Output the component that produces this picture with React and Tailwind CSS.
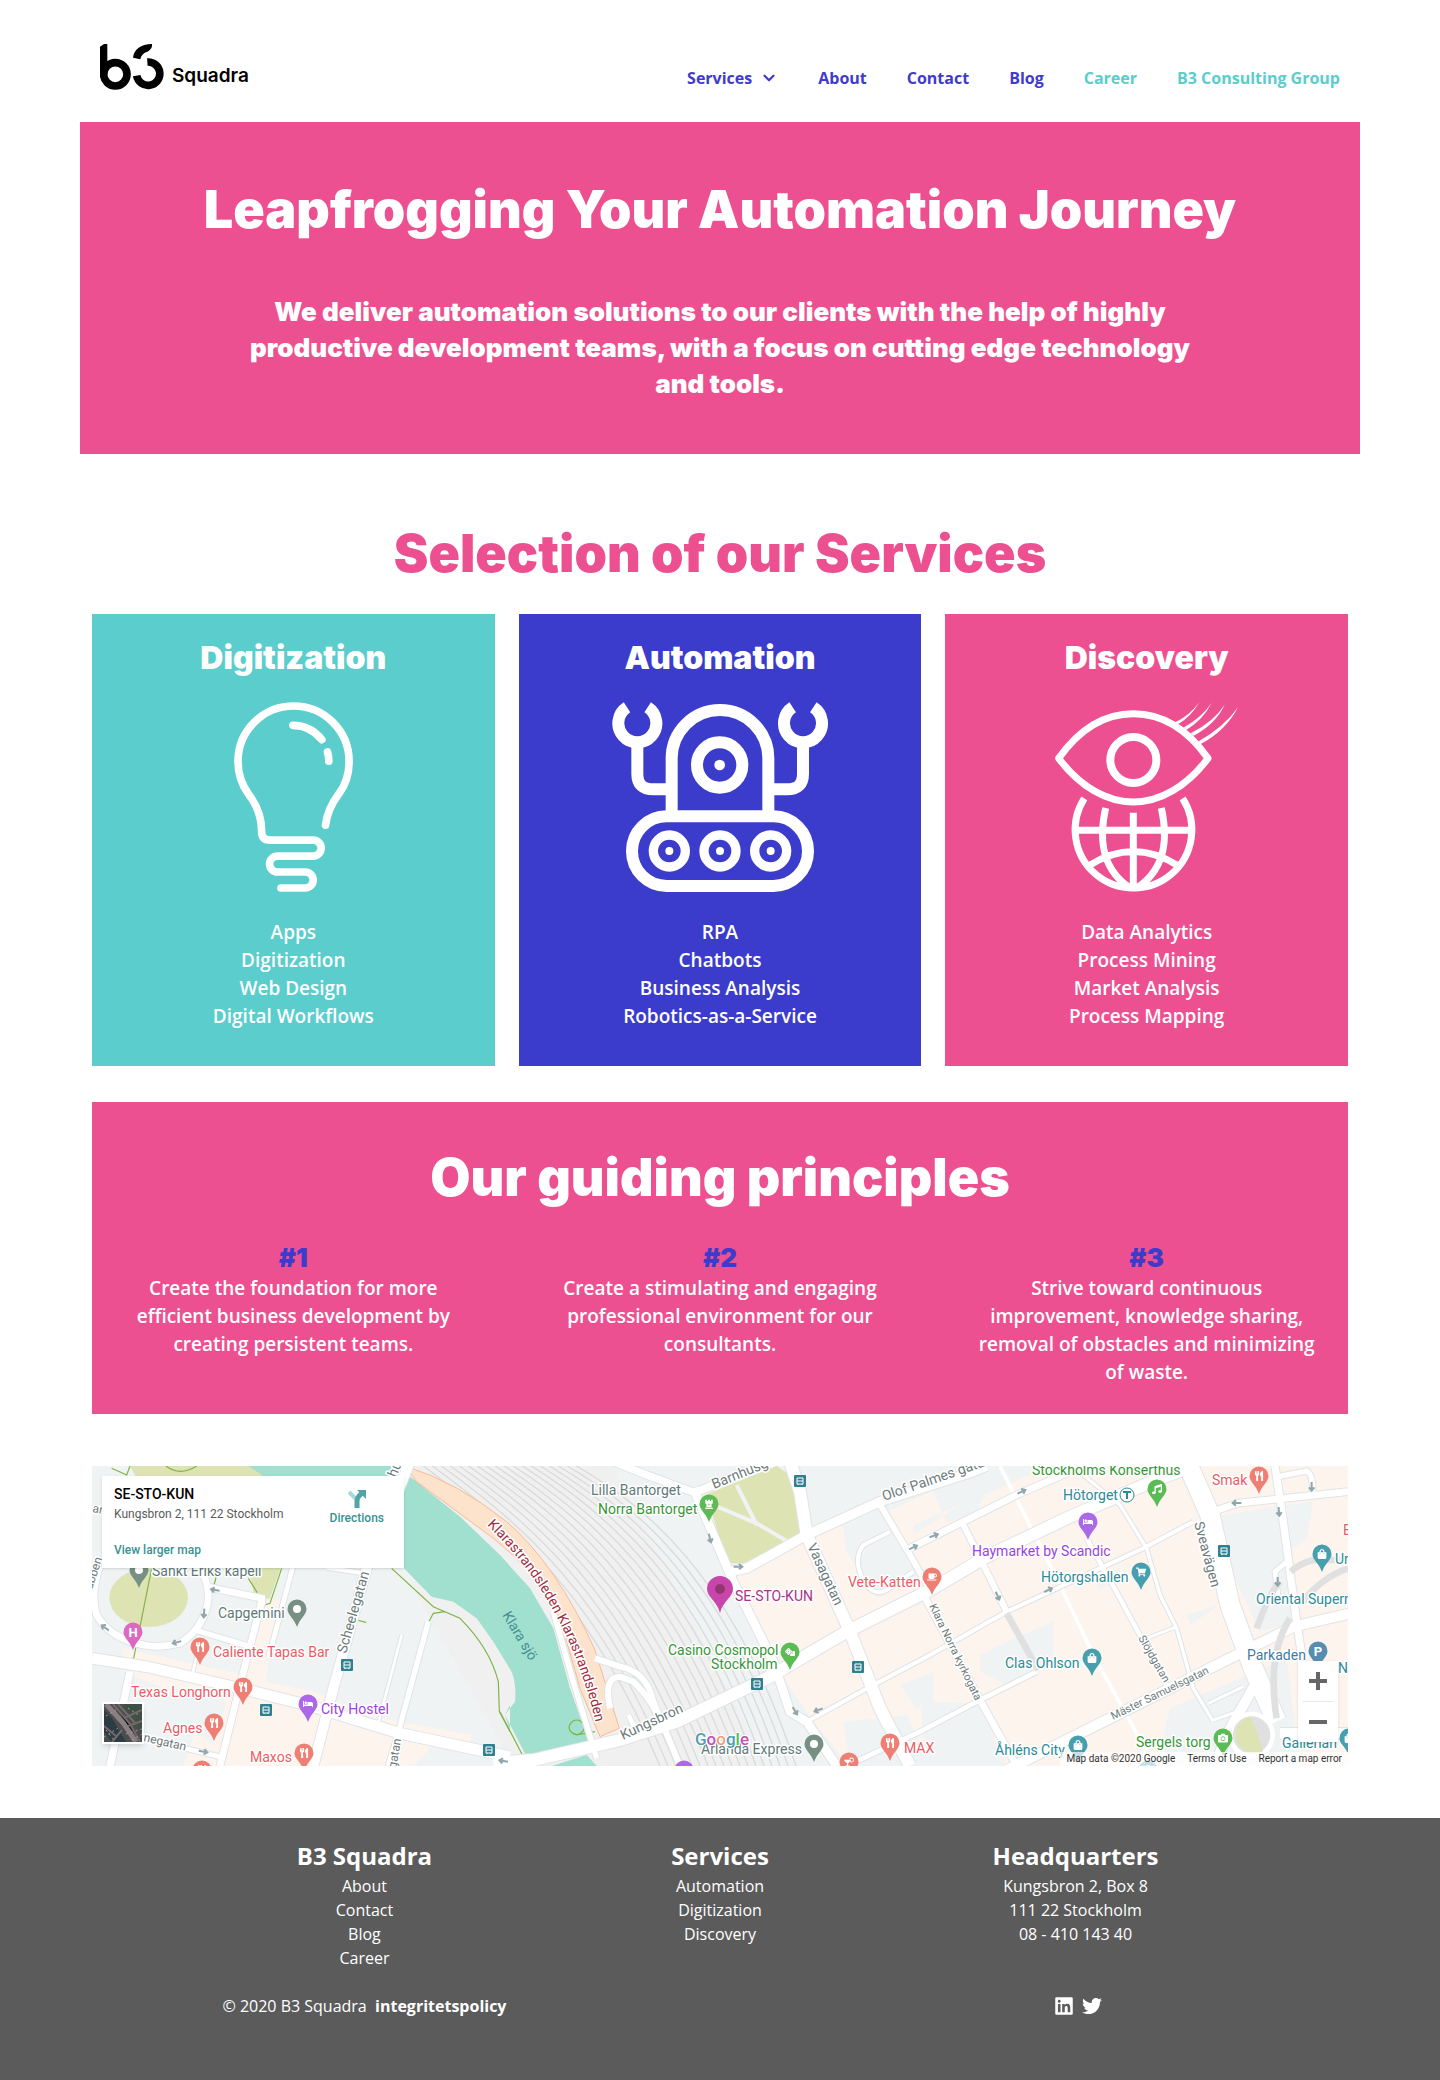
import React from "react";
import { FaLinkedin, FaTwitter, FaUtensils, FaBed, FaShoppingBag, FaMusic, FaCamera, FaShoppingCart, FaCoffee, FaChessRook, FaDice, FaCocktail } from "react-icons/fa";
import { ChevronDown } from "lucide-react";

const heading = "font-['Inter'] font-black";

function Logo() {
  return (
    <a href="#home" aria-label="B3 Squadra" className="flex items-end gap-2 text-black">
      <svg viewBox="18 24 192 138" className="h-[46px] w-16" fill="none" stroke="currentColor" strokeWidth="23">
        <path d="M18 32L30 24H40V115H18Z" fill="currentColor" stroke="none" />
        <circle cx="64" cy="115" r="35" />
        <path d="M117 65C120 40 140 24 174 24C176 34 168 44 158 48C148 51 141 59 139 70Z" fill="currentColor" stroke="none" />
        <path d="M128 119A35 35 0 1 0 160 78" />
      </svg>
      <span className="font-['Inter'] text-[19px] font-semibold leading-7">Squadra</span>
    </a>
  );
}

function Header() {
  const link = "hover:underline";
  return (
    <header className="flex items-start justify-between px-5 pb-8 pt-11">
      <Logo />
      <nav className="mt-[22px] flex items-center gap-10 text-base font-bold leading-6 text-[#3f3bcb]">
        <button type="button" className="flex items-center gap-2">
          Services
          <ChevronDown size={18} strokeWidth={3} />
        </button>
        <a className={link} href="#about">About</a>
        <a className={link} href="#contact">Contact</a>
        <a className={link} href="#blog">Blog</a>
        <a className="text-[#5acdcc] hover:underline" href="#career">Career</a>
        <a className="text-[#5acdcc] hover:underline" href="#group">B3 Consulting Group</a>
      </nav>
    </header>
  );
}

const Bulb = () => (
  <svg viewBox="462 306 358 571" className="h-[190px]" fill="none" stroke="white" strokeWidth="23" strokeLinecap="round">
    <path d="M737 676C742 640 755 612 775 585C797 557 808 525 808 485A167 167 0 0 0 474 485C474 525 485 555 507 585C530 615 545 650 545 695Q545 721 570 721H700A24 24 0 0 1 700 769H593A24 24 0 0 0 593 817H676A24 24 0 0 1 676 865H603" />
    <path d="M639 376Q692 376 726 419M743 456Q747 470 747 484" />
  </svg>
);

const Robot = () => (
  <svg viewBox="306 306 648 570" className="h-[190px]" fill="none" stroke="white" strokeWidth="36">
    <path d="M485 640V475A145 145 0 0 1 775 475V640" />
    <rect x="366" y="649" width="528" height="209" rx="104" />
    <circle cx="629" cy="495" r="68" />
    <circle cx="629" cy="495" r="16" fill="white" stroke="none" />
    <path d="M382 430V522Q382 568 430 568H475M879 430V522Q879 568 831 568H785" />
    <path d="M351 322A57 57 0 1 0 413 322M848 322A57 57 0 1 0 910 322" />
    {[478, 630, 782].map((x) => (
      <g key={x}>
        <circle cx={x} cy="753" r="48" strokeWidth="28" />
        <circle cx={x} cy="753" r="12" fill="white" stroke="none" />
      </g>
    ))}
  </svg>
);

const Eye = () => (
  <svg viewBox="345 306 550 570" className="h-[190px]" fill="none" stroke="white" strokeWidth="21">
    <path strokeLinejoin="round" d="M356 475C430 370 510 341 580 341S730 370 804 475C740 560 660 606 580 606S420 560 356 475Z" />
    <circle cx="580" cy="480" r="69" strokeWidth="24" />
    <g fill="white" stroke="none">
      <path d="M703 368Q752 345 778 306Q754 350 712 374Z" />
      <path d="M730 383Q786 352 815 308Q790 358 739 390Z" />
      <path d="M752 400Q822 364 854 314Q828 371 761 407Z" />
      <path d="M774 425Q852 382 894 322Q858 392 781 433Z" />
    </g>
    <path d="M433 595A175 175 0 1 0 728 595M404 691H758M580 638V870M497 624C480 700 475 800 570 864M664 624C681 700 686 800 591 864M447 797Q580 712 714 797" />
  </svg>
);

const services = [
  { title: "Digitization", Icon: Bulb, bg: "bg-[#5acdcc]", items: ["Apps", "Digitization", "Web Design", "Digital Workflows"] },
  { title: "Automation", Icon: Robot, bg: "bg-[#3c3ccc]", items: ["RPA", "Chatbots", "Business Analysis", "Robotics-as-a-Service"] },
  { title: "Discovery", Icon: Eye, bg: "bg-[#ed5090]", items: ["Data Analytics", "Process Mining", "Market Analysis", "Process Mapping"] },
];

const principles = [
  "Create the foundation for more efficient business development by creating persistent teams.",
  "Create a stimulating and engaging professional environment for our consultants.",
  "Strive toward continuous improvement, knowledge sharing, removal of obstacles and minimizing of waste.",
];

/* Map geometry is kept in a grid three times finer than the drawn pixels. */
const roads = [
  ["M36 610L200 635L480 700L700 755L960 835L1290 905", 32],
  ["M1240 925L1360 915L1620 855L1790 800L2060 670L2300 530L2550 405L2720 305L2960 190L3240 70L3340 33", 36],
  ["M150 650L90 933", 22],
  ["M545 440L480 690L420 933", 20],
  ["M380 395L545 430V450", 20],
  ["M345 320Q395 380 382 450Q365 525 300 565Q240 580 190 570Q90 550 50 480Q30 420 60 330", 20],
  ["M345 525L510 575", 16],
  ["M640 330L565 610", 14],
  ["M990 20L860 340L760 700L700 933", 30],
  ["M965 540L892 815", 8],
  ["M1045 500L950 850L925 933", 16],
  ["M740 338L850 355", 12],
  ["M350 600L335 670", 8],
  ["M190 850L420 905", 14],
  ["M1600 20L1700 60L1850 115", 22],
  ["M1840 115L2070 20", 24],
  ["M1840 100L1900 240L1960 380L2080 620L2130 770L2180 800L2270 933", 26],
  ["M2130 20L2160 110L2180 240L2310 530L2400 760L2490 933", 36],
  ["M1950 350L2000 340L2180 240L2400 140L2680 50L2720 33", 28],
  ["M2480 285L2520 265L2820 115L3010 33", 20],
  ["M2395 140L2490 300L2550 405", 18],
  ["M2180 800L2380 690L2550 600L2780 470L3190 280L3340 200", 12],
  ["M2430 230L2350 270Q2320 310 2345 365Q2375 430 2420 405L2500 350", 12],
  ["M2650 210L2780 470", 18],
  ["M2520 400L2700 735L2810 933", 20],
  ["M2300 933L2520 830L2700 735L2870 650", 14],
  ["M3010 60L3120 150L3200 280L3240 420L3290 520L3340 700L3400 800", 10],
  ["M3020 250L3120 430L3260 690", 13],
  ["M3200 550L3290 515", 8],
  ["M3385 745L3490 695M3400 795L3500 760", 9],
  ["M2780 945L3090 790L3360 655L3640 515L3810 475", 30],
  ["M3320 20L3390 180L3450 450L3520 640L3590 800", 58],
  ["M3400 170L3470 145L3804 110", 20],
  ["M3585 33L3610 200L3650 500L3680 700", 22],
  ["M3595 65L3680 48Q3700 60 3698 110", 16],
  ["M3595 430L3585 350L3620 320", 14],
  ["M3600 835H3810", 32],
  ["M3400 945L3440 840L3530 680", 30],
  ["M1545 610L1620 635Q1700 650 1720 740L1800 933M1590 760Q1570 665 1620 665L1660 680Q1720 740 1735 790", 18],
  ["M1645 780L1680 850", 14],
  ["M1420 470L1480 680L1550 910", 16],
];

const rails = Array.from({ length: 18 }, (_, i) =>
  `M${1030 + 27 * i} 33C${1270 + 24 * i} ${210 - 4 * i} ${1530 + 25 * i} ${430 - 5 * i} ${1740 + 24 * i} 933`
).join("");

function MapBase() {
  return (
    <g transform="translate(-12 -11) scale(.33333)">
      <rect x="36" y="33" width="3768" height="900" fill="#f0f3f3" />
      <path fill="#f0f0f0" d="M1000 33H1600L2060 933H1300L1000 400Z" />
      <path fill="#fef4ee" d="M130 580L490 660L545 440L605 432L555 680L700 710L900 790L1175 840L1165 880L1060 870L1000 933H310L345 830L400 870L440 740L250 700L130 650Z" />
      <path fill="#fef4ee" d="M1965 365L2190 250L2285 205L2300 260L2420 170L2600 90L3100 33H3804V933H2560L2480 780L2290 800L2310 933L2200 800L2080 620Z" />
      <path fill="#f0f3f3" d="M2290 235L2420 160L2490 290L2520 380L2390 430L2300 290ZM2500 240L2720 100L2690 180L2600 200L2520 33H2760L2850 60L2500 210ZM2460 690L2560 650V750L2510 760ZM3380 190L3600 150L3640 500L3540 530ZM3620 150L3700 140L3680 250L3630 290ZM3270 760L3620 610L3660 933H3230ZM2520 740L2700 745L2780 933H2540ZM2700 600L2780 560L2920 500V620L2780 690L2700 650ZM3040 370L3120 340V380L3060 400ZM3320 480L3420 450L3330 510Z" />
      <path fill="#dde3b3" d="M150 33H520L570 70L170 70ZM505 330H605L570 430L525 435Z" />
      <ellipse cx="206" cy="428" rx="118" ry="88" fill="#dde3b3" />
      <path fill="#a1dfcf" d="M505 33H950L1010 80L1140 185L1260 300L1350 400L1420 520L1470 700L1530 870L1345 915L1275 780L1305 740Q1310 690 1295 650L1240 560L1190 490L1120 440L1055 425L972 340ZM1415 933L1520 900L1550 933ZM1290 750L1275 780L1290 830Z" />
      <path fill="none" stroke="#d9dbdb" strokeWidth="4" d={rails} />
      <path fill="#fde3cb" stroke="#f9b994" strokeWidth="3" d="M975 33Q1130 80 1280 200Q1430 330 1545 585L1618 820L1560 845L1500 700L1440 490Q1370 350 1240 250L1010 80Z" />
      <path fill="#dde3b3" d="M1880 118L2090 33L2130 60L2165 200L2160 240L1990 325L1940 325Z" />
      <path fill="none" stroke="#f0f3f3" strokeWidth="12" d="M1900 150L2030 205L2150 275M1970 90L2030 210" />
      <path fill="none" stroke="#7eb445" strokeWidth="3.5" d="M95 40L140 60L150 33M258 33Q300 65 350 33M215 340L160 615M410 360L402 390M505 370L530 410V425M605 340L570 445L548 452M935 340L1060 455L1140 490Q1230 580 1255 680L1258 770L1290 830M1095 470L1060 475L1048 498M830 495L858 502M1260 770L1335 915M1545 830L1490 840C1450 830 1470 785 1500 797C1530 815 1500 850 1480 835M1510 800L1530 860" />
      <path fill="none" stroke="white" strokeWidth="11" d="M2760 33L2940 390L3040 600L3200 890" />
      <g fill="none" stroke="#e0e4e6">
        {roads.map(([d, w]) => <path key={d} d={d} strokeWidth={w + 6} />)}
      </g>
      <g fill="none" stroke="white">
        {roads.map(([d, w]) => <path key={d} d={d} strokeWidth={w} />)}
      </g>
      <g fill="none" stroke="#e0e0e0" strokeWidth="20">
        <path d="M2780 475L2875 645M3530 520Q3570 410 3600 380M3632 350Q3660 325 3700 315H3804M3590 790Q3560 600 3630 490M3665 445Q3720 370 3804 340" />
      </g>
      <circle cx="3515" cy="840" r="70" fill="white" />
      <circle cx="3515" cy="840" r="56" fill="#e0e0e0" />
      <path fill="#dde3b3" d="M3512 784L3550 888A56 56 0 1 1 3512 784Z" />
      <g fill="none" stroke="#91a5ad" strokeWidth="6">
        {[[405, 405, 190], [372, 475, 95], [75, 518, 215], [290, 562, 165], [370, 890, 10], [1890, 250, 75], [1975, 335, 0], [2145, 768, 60], [2215, 765, 160], [2500, 277, -25], [2562, 242, -20], [2825, 110, -25], [2753, 423, 65], [2905, 405, -25], [3470, 144, 180], [3597, 170, 85], [3695, 95, 90], [3593, 380, 90], [1270, 918, 190]].map(([x, y, r]) => (
          <path key={`${x}-${y}`} transform={`translate(${x} ${y}) rotate(${r})`} d="M-14 0H10M2 -8L12 0L2 8" />
        ))}
      </g>
    </g>
  );
}

const pinColors = { red: "#ef7f75", grey: "#779083", teal: "#459fae", purple: "#ab68e8", green: "#5bbb55", pink: "#dc69c1", blue: "#568eb2" };

const pins = [
  [47, 104, "grey", "dot"], [205, 143, "grey", "dot"], [722, 278, "grey", "dot"],
  [108, 181, "red", FaUtensils], [151, 221, "red", FaUtensils], [122, 257, "red", FaUtensils], [212, 287, "red", FaUtensils],
  [110, 304, "red", FaUtensils], [798, 277, "red", FaUtensils], [1167, 10, "red", FaUtensils], [757, 296, "red", FaCocktail], [840, 111, "red", FaCoffee],
  [216, 238, "purple", FaBed], [996, 56, "purple", FaBed], [592, 304, "purple", FaBed],
  [41, 166, "pink", "H"], [1226, 185, "blue", "P"],
  [617, 38, "green", FaChessRook], [698, 186, "green", FaDice], [1065, 23, "green", FaMusic], [1131, 272, "green", FaCamera],
  [1049, 106, "teal", FaShoppingCart], [1230, 88, "teal", FaShoppingBag], [1000, 192, "teal", FaShoppingBag], [986, 279, "teal", FaShoppingBag], [1257, 272, "teal", FaShoppingBag], [1056, 304, "teal", FaShoppingBag],
];

function Pin({ x, y, color, icon: Icon }) {
  return (
    <g transform={`translate(${x} ${y})`}>
      <path fill={pinColors[color]} d="M0 -9.5A9.5 9.5 0 0 1 9.5 0C9.5 6 3 9 0 18C-3 9 -9.5 6 -9.5 0A9.5 9.5 0 0 1 0 -9.5Z" />
      {Icon === "dot" && <circle r="4" fill="white" />}
      {(Icon === "H" || Icon === "P") && <text y="5" textAnchor="middle" fontSize="13" fontWeight="700" fill="white" stroke="none">{Icon}</text>}
      {typeof Icon === "function" && <Icon x="-5" y="-5" size={10} color="white" />}
    </g>
  );
}

const C = { grey: "#5f7a78", red: "#ee5b66", teal: "#2b8b96", purple: "#9a43de", green: "#389638", street: "#6d7b7b" };

const labels = [
  ["Sankt Eriks kapell", 60, 110, C.grey], ["Capgemini", 126, 152, C.grey], ["Lilla Bantorget", 499, 29, C.grey], ["Arlanda Express", 609, 288, C.grey],
  ["Caliente Tapas Bar", 121, 191, C.red], ["Texas Longhorn", 39, 231, C.red], ["Agnes", 71, 267, C.red], ["Maxos", 158, 296, C.red],
  ["MAX", 812, 287, C.red], ["Vete-Katten", 756, 121, C.red], ["Smak", 1120, 19, C.red], ["E", 1251, 69, C.red],
  ["City Hostel", 229, 248, C.purple], ["Haymarket by Scandic", 880, 90, C.purple],
  ["Norra Bantorget", 506, 48, C.green], ["Casino Cosmopol", 576, 189, C.green], ["Stockholm", 619, 203, C.green], ["Stockholms Konserthus", 940, 9, C.green], ["Sergels torg", 1044, 281, C.green],
  ["SE-STO-KUN", 643, 135, "#a8328c"],
  ["Hötorget", 971, 34, C.teal], ["Hötorgshallen", 949, 116, C.teal], ["Clas Ohlson", 913, 202, C.teal], ["Åhléns City", 903, 289, C.teal],
  ["Oriental Supermarket", 1164, 138, C.teal], ["Ur", 1243, 98, C.teal], ["Gallerian", 1190, 282, C.teal], ["N", 1246, 207, C.teal], ["Parkaden", 1155, 194, "#3f7ca9"],
  ["Scheelegatan", 254, 188, C.street, -74], ["negatan", 51, 275, C.street, 13, 12], ["gatan", 304, 303, C.street, -80, 12],
  ["an", 0, 46, C.street, 10, 12], ["ubben", 0, 124, C.street, -72, 12], ["hu", 304, 12, C.street, -68],
  ["Kungsbron", 531, 274, C.street, -25], ["Barnhusgatan", 622, 23, C.street, -22], ["Olof Palmes gata", 792, 35, C.street, -19],
  ["Vasagatan", 715, 80, C.street, 65], ["Klara Norra kyrkogata", 837, 140, C.street, 64, 11], ["Slöjdgatan", 1046, 172, C.street, 60, 11],
  ["Mäster Samuelsgatan", 1021, 254, C.street, -26, 11], ["Sveavägen", 1102, 57, C.street, 75],
];

const busStops = [[255, 199], [174, 244], [397, 284], [708, 15], [766, 201], [665, 218], [1132, 85]];

const googleLetters = [["G", "#4f9fb0"], ["o", "#c94fb5"], ["o", "#f0a07c"], ["g", "#4f9fb0"], ["l", "#5bbb55"], ["e", "#c94fb5"]];

function MapDrawing() {
  return (
    <svg viewBox="0 0 1256 300" preserveAspectRatio="xMidYMid slice" className="block h-full w-full font-['Roboto']" role="img" aria-label="Map of central Stockholm">
      <MapBase />
      {busStops.map(([x, y]) => (
        <g key={`${x}-${y}`} transform={`translate(${x} ${y})`}>
          <rect x="-6" y="-6" width="12" height="12" rx="1" fill="#2f8090" />
          <path d="M-3 -3H3V3H-3ZM-3 0H3M-2 3V4M2 3V4" fill="none" stroke="white" />
        </g>
      ))}
      <text fontSize="14" fill="#438f92" transform="translate(410 149) rotate(59)">Klara sjö</text>
      <g stroke="white" strokeWidth="3" strokeLinejoin="round" style={{ paintOrder: "stroke" }}>
        {labels.map(([t, x, y, fill, r = 0, size = 14]) => (
          <text key={t} fill={fill} fontSize={size} transform={`translate(${x} ${y}) rotate(${r})`}>{t}</text>
        ))}
        <path id="highway" d="M395 59C424 87 447 116 464 150Q492 200 508 275" fill="none" stroke="none" />
        <text fontSize="14" fill="#a02c40"><textPath href="#highway">Klarastrandsleden Klarastrandsleden</textPath></text>
      </g>
      {pins.map(([x, y, color, icon]) => <Pin key={`${x}-${y}`} x={x} y={y} color={color} icon={icon} />)}
      <circle cx="1035" cy="29" r="7" fill="white" stroke={C.teal} strokeWidth="1" />
      <path d="M1031 26H1039M1035 26V33" stroke={C.teal} strokeWidth="2" />
      <g transform="translate(628 123)">
        <path fill="#c846ab" d="M0 -13A13 13 0 0 1 13 0C13 8 3 12 0 24C-3 12 -13 8 -13 0A13 13 0 0 1 0 -13Z" />
        <circle r="5" fill="#943670" />
      </g>
      <text x="603" y="279" fontSize="17" fontWeight="500" stroke="white" strokeWidth="2" style={{ paintOrder: "stroke" }}>
        {googleLetters.map(([l, fill], i) => <tspan key={i} fill={fill}>{l}</tspan>)}
      </text>
    </svg>
  );
}

function MapSection() {
  return (
    <section className="relative mx-3 mt-[52px] h-[300px] overflow-hidden font-['Roboto']">
      <MapDrawing />
      <div className="absolute left-[10px] top-[10px] flex w-[302px] justify-between bg-white py-2 pl-3 pr-5 text-xs shadow">
        <div>
          <h3 className="text-sm font-medium leading-5 text-black">SE-STO-KUN</h3>
          <p className="leading-5 text-[#5b5b5b]">Kungsbron 2, 111 22 Stockholm</p>
          <a href="#larger" className="mt-4 block font-medium leading-5 text-[#3a9292]">View larger map</a>
        </div>
        <a href="#directions" className="flex flex-col items-center pt-1 font-medium text-[#3a9292]">
          <svg viewBox="0 0 18 20" className="h-5 w-[18px]" fill="none">
            <path d="M1 4L8 11" stroke="#a9dad8" strokeWidth="4" />
            <path d="M9 20V13Q9 10 11 8L14 5" stroke="#4fa5a8" strokeWidth="5" />
            <path d="M9 2H18V11Z" fill="#4fa5a8" />
          </svg>
          <span className="leading-5">Directions</span>
        </a>
      </div>
      <button type="button" aria-label="Show satellite imagery" className="absolute bottom-[22px] left-[10px] border-2 border-white bg-[#4a4f4e] shadow-md">
        <svg viewBox="0 0 38 38" className="size-[38px]">
          <path fill="#3f5144" d="M18 0H38V30L30 16Z" />
          <path fill="#2d3b45" d="M0 6L8 14L22 38H8L0 28Z" />
          <path stroke="#8c7f83" strokeWidth="5" d="M2 0L20 20L32 38" />
          <path stroke="#75696d" strokeWidth="2" d="M9 0L26 20L36 38M14 0L32 20M20 14L38 6M24 22L38 17M0 22L12 32M18 26L8 38" />
          <path stroke="#a09d97" strokeDasharray="2 3" d="M0 33L14 24M24 4L36 12M22 30L38 25M2 12L12 6M2 26L10 36M28 36L38 30" />
        </svg>
      </button>
      <div className="absolute bottom-0 right-0 flex gap-3 bg-white/70 px-[6px] text-[10px] leading-[14px] text-[#333]">
        <span>Map data ©2020 Google</span>
        <a href="#terms">Terms of Use</a>
        <a href="#report">Report a map error</a>
      </div>
      <div className="absolute bottom-6 right-[10px] flex w-10 flex-col items-center bg-white shadow">
        <button type="button" aria-label="Zoom in" className="flex size-10 items-center justify-center">
          <svg viewBox="0 0 18 18" className="size-[18px]"><path d="M0 9H18M9 0V18" stroke="#666" strokeWidth="4" /></svg>
        </button>
        <span className="h-px w-[30px] bg-[#e6e6e6]" />
        <button type="button" aria-label="Zoom out" className="flex size-10 items-center justify-center">
          <svg viewBox="0 0 18 18" className="size-[18px]"><path d="M0 9H18" stroke="#666" strokeWidth="4" /></svg>
        </button>
      </div>
    </section>
  );
}

function FooterColumn({ title, lines, linked }) {
  return (
    <div>
      <h3 className="pb-0.5 text-2xl font-bold leading-8">{title}</h3>
      <ul className="leading-6">
        {lines.map((l) => <li key={l}>{linked ? <a href={`#${l.toLowerCase()}`} className="hover:underline">{l}</a> : l}</li>)}
      </ul>
    </div>
  );
}

function Footer() {
  return (
    <footer className="mt-[52px] bg-[#5b5b5b] pb-16 pt-[22px] text-center text-base text-white">
      <div className="mx-auto max-w-7xl">
        <div className="mx-auto grid w-5/6 grid-cols-3 gap-y-6">
          <FooterColumn title="B3 Squadra" lines={["About", "Contact", "Blog", "Career"]} linked />
          <FooterColumn title="Services" lines={["Automation", "Digitization", "Discovery"]} linked />
          <FooterColumn title="Headquarters" lines={["Kungsbron 2, Box 8", "111 22 Stockholm", "08 - 410 143 40"]} />
          <p className="leading-6">© 2020 B3 Squadra&nbsp; <a href="#policy" className="font-bold">integritetspolicy</a></p>
          <div className="col-start-3 flex items-center justify-center gap-2 pl-1">
            <a href="#linkedin" aria-label="LinkedIn"><FaLinkedin size={20} /></a>
            <a href="#twitter" aria-label="Twitter"><FaTwitter size={20} /></a>
          </div>
        </div>
      </div>
    </footer>
  );
}

export default function App() {
  return (
    <div className="bg-white font-['Open_Sans',sans-serif]">
      <div className="mx-auto max-w-7xl">
        <Header />
        <main>
          <section className="bg-[#ed5090] px-24 pb-[52px] pt-14 text-center text-white">
            <h1 className={`${heading} text-[52px] leading-[64px]`}>Leapfrogging Your Automation Journey</h1>
            <p className={`${heading} mx-auto mt-[52px] max-w-[960px] text-[26px] leading-9`}>
              We deliver automation solutions to our clients with the help of highly productive development teams, with a focus on cutting edge technology and tools.
            </p>
          </section>

          <h2 className={`${heading} mt-[68px] text-center text-[52px] leading-[64px] text-[#ed5090]`}>Selection of our Services</h2>
          <section className="mx-3 mt-7 grid grid-cols-3 gap-6">
            {services.map(({ title, Icon, bg, items }) => (
              <article key={title} className={`${bg} flex flex-col items-center px-6 pb-9 pt-6 text-center text-white`}>
                <h3 className={`${heading} mb-6 text-[32px] leading-10`}>{title}</h3>
                <Icon />
                <ul className="mt-[26px] text-[19px] font-semibold leading-7">
                  {items.map((i) => <li key={i}>{i}</li>)}
                </ul>
              </article>
            ))}
          </section>

          <section className="mx-3 mt-9 bg-[#ed5090] pb-7 pt-11 text-center text-white">
            <h2 className={`${heading} text-[52px] leading-[64px]`}>Our guiding principles</h2>
            <div className="mt-8 grid grid-cols-3 gap-6">
              {principles.map((text, i) => (
                <div key={text} className="px-6">
                  <h3 className={`${heading} text-[26px] leading-8 text-[#3c3ccc]`}>#{i + 1}</h3>
                  <p className="text-[19px] font-semibold leading-7">{text}</p>
                </div>
              ))}
            </div>
          </section>

          <MapSection />
        </main>
      </div>
      <Footer />
    </div>
  );
}
